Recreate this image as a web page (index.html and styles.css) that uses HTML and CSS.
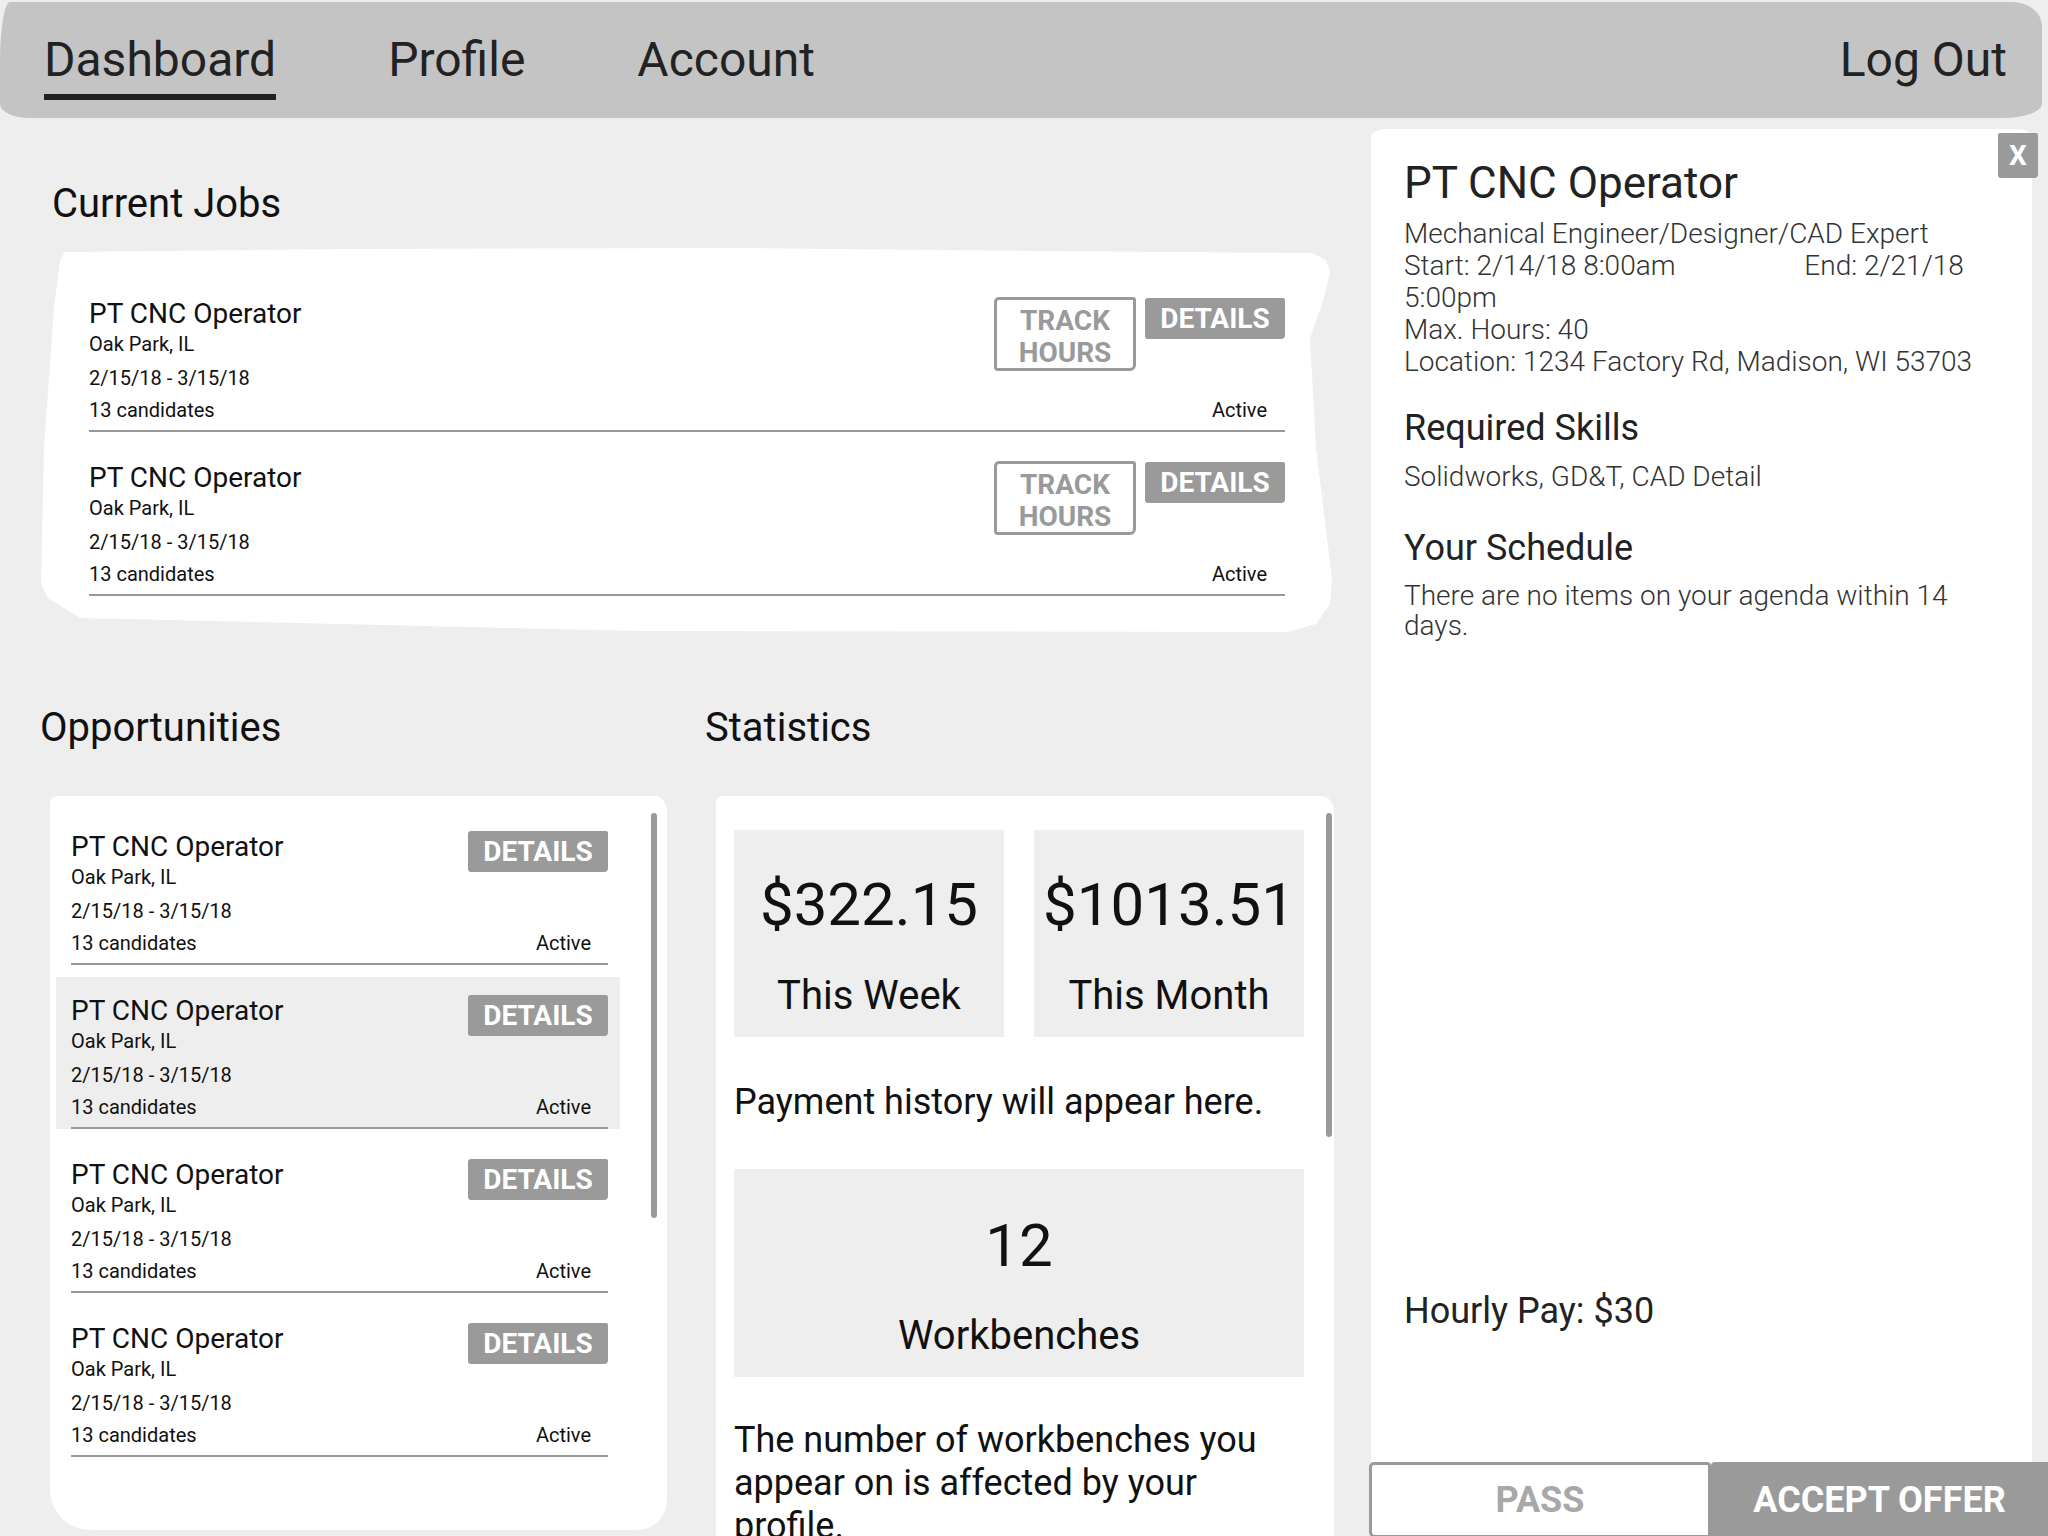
FILE: index.html
```html
<!DOCTYPE html>
<html lang="en">
<head>
<meta charset="utf-8">
<title>Dashboard</title>
<link rel="stylesheet" href="styles.css">
</head>
<body>
<header class="nav">
  <span class="nav-item active">Dashboard</span>
  <span class="nav-item">Profile</span>
  <span class="nav-item">Account</span>
  <span class="nav-item logout">Log Out</span>
</header>
<div class="main">
  <div class="left">
    <h2 class="section-title cj-title">Current Jobs</h2>
    <div class="jobs-card">
      <div class="job-row">
        <div class="job-info">
          <div class="title">PT CNC Operator</div>
          <div class="meta">Oak Park, IL</div>
          <div class="meta date">2/15/18 - 3/15/18</div>
          <div class="meta cand">13 candidates</div>
        </div>
        <div class="job-actions">
          <div class="btns"><span class="btn-track">TRACK<br>HOURS</span><span class="btn-details">DETAILS</span></div>
          <div class="status">Active</div>
        </div>
      </div>
      <div class="job-row">
        <div class="job-info">
          <div class="title">PT CNC Operator</div>
          <div class="meta">Oak Park, IL</div>
          <div class="meta date">2/15/18 - 3/15/18</div>
          <div class="meta cand">13 candidates</div>
        </div>
        <div class="job-actions">
          <div class="btns"><span class="btn-track">TRACK<br>HOURS</span><span class="btn-details">DETAILS</span></div>
          <div class="status">Active</div>
        </div>
      </div>
    </div>
    <div class="lower">
      <section class="opps">
        <h2 class="section-title">Opportunities</h2>
        <div class="opp-card">
          <div class="opp-item">
            <div class="job-row">
              <div class="job-info">
                <div class="title">PT CNC Operator</div>
                <div class="meta">Oak Park, IL</div>
                <div class="meta date">2/15/18 - 3/15/18</div>
                <div class="meta cand">13 candidates</div>
              </div>
              <div class="job-actions">
                <span class="btn-details">DETAILS</span>
                <div class="status">Active</div>
              </div>
            </div>
          </div>
          <div class="opp-item hl">
            <div class="job-row">
              <div class="job-info">
                <div class="title">PT CNC Operator</div>
                <div class="meta">Oak Park, IL</div>
                <div class="meta date">2/15/18 - 3/15/18</div>
                <div class="meta cand">13 candidates</div>
              </div>
              <div class="job-actions">
                <span class="btn-details">DETAILS</span>
                <div class="status">Active</div>
              </div>
            </div>
          </div>
          <div class="opp-item">
            <div class="job-row">
              <div class="job-info">
                <div class="title">PT CNC Operator</div>
                <div class="meta">Oak Park, IL</div>
                <div class="meta date">2/15/18 - 3/15/18</div>
                <div class="meta cand">13 candidates</div>
              </div>
              <div class="job-actions">
                <span class="btn-details">DETAILS</span>
                <div class="status">Active</div>
              </div>
            </div>
          </div>
          <div class="opp-item">
            <div class="job-row">
              <div class="job-info">
                <div class="title">PT CNC Operator</div>
                <div class="meta">Oak Park, IL</div>
                <div class="meta date">2/15/18 - 3/15/18</div>
                <div class="meta cand">13 candidates</div>
              </div>
              <div class="job-actions">
                <span class="btn-details">DETAILS</span>
                <div class="status">Active</div>
              </div>
            </div>
          </div>
          <div class="scrollbar opp-scroll"></div>
        </div>
      </section>
      <section class="stats">
        <h2 class="section-title">Statistics</h2>
        <div class="stats-card">
          <div class="stat-grid">
            <div class="stat-box">
              <div class="stat-value">$322.15</div>
              <div class="stat-label">This Week</div>
            </div>
            <div class="stat-box">
              <div class="stat-value">$1013.51</div>
              <div class="stat-label">This Month</div>
            </div>
          </div>
          <p class="stat-text payment">Payment history will appear here.</p>
          <div class="stat-box wide">
            <div class="stat-value">12</div>
            <div class="stat-label">Workbenches</div>
          </div>
          <p class="stat-text wb-text">The number of workbenches you appear on is affected by your profile.</p>
          <div class="scrollbar stats-scroll"></div>
        </div>
      </section>
    </div>
  </div>
  <aside class="panel">
    <span class="close">X</span>
    <h1 class="panel-title">PT CNC Operator</h1>
    <div class="panel-details">
      <div>Mechanical Engineer/Designer/CAD Expert</div>
      <div><span class="start">Start: 2/14/18 8:00am</span> End: 2/21/18 5:00pm</div>
      <div>Max. Hours: 40</div>
      <div>Location: 1234 Factory Rd, Madison, WI 53703</div>
    </div>
    <h3 class="panel-h">Required Skills</h3>
    <div class="panel-text">Solidworks, GD&amp;T, CAD Detail</div>
    <h3 class="panel-h sched">Your Schedule</h3>
    <div class="panel-text agenda">There are no items on your agenda within 14 days.</div>
    <div class="panel-footer">
      <div class="hourly">Hourly Pay: $30</div>
      <div class="offer-btns">
        <span class="btn-pass">PASS</span>
        <span class="btn-accept">ACCEPT OFFER</span>
      </div>
    </div>
  </aside>
</div>
</body>
</html>
```

FILE: styles.css
```css
* { box-sizing: border-box; margin: 0; padding: 0; }

body {
  width: 2048px;
  height: 1536px;
  overflow: hidden;
  background: #eeeeee;
  font-family: Roboto, "Liberation Sans", sans-serif;
  color: #111;
}

/* Top navigation */
.nav {
  display: flex;
  align-items: flex-start;
  gap: 112px;
  height: 116px;
  margin: 2px 6px 0 0;
  padding: 34px 35px 0 44px;
  background: #c4c4c4;
  border-radius: 10px 30px 40px 30px / 60px 24px 14px 14px;
}
.nav-item {
  font-size: 48px;
  line-height: 48px;
  color: #222;
  padding-bottom: 10px;
}
.nav-item.active { border-bottom: 6px solid #222; }
.nav-item.logout { margin-left: auto; }

.main { display: flex; }
.left { width: 1371px; flex: none; }

.section-title {
  font-size: 40px;
  line-height: 48px;
  font-weight: 400;
  color: #111;
}
.cj-title { margin: 62px 0 0 52px; }

/* Current jobs card (hand-drawn outline) */
.jobs-card {
  width: 1295px;
  height: 384px;
  margin: 20px 0 0 40px;
  padding: 20px 50px 36px 49px;
  background: #fff;
  clip-path: polygon(25px 4px, 300px 1px, 700px 0, 1000px 3px, 1272px 5px, 1286px 12px, 1290px 24px, 1284px 50px, 1270px 90px, 1276px 200px, 1292px 330px, 1290px 356px, 1276px 376px, 1248px 384px, 600px 383px, 40px 370px, 8px 350px, 1px 336px, 4px 200px, 14px 60px, 20px 12px);
}
.job-row {
  display: flex;
  justify-content: space-between;
  padding: 30px 0 6px;
  border-bottom: 2px solid #999;
}
.title { font-size: 28px; line-height: 32px; color: #111; }
.meta { font-size: 20px; line-height: 28px; color: #111; }
.meta.date { margin-top: 6px; }
.meta.cand { margin-top: 4px; }

.job-actions {
  display: flex;
  flex-direction: column;
  align-items: flex-end;
  justify-content: space-between;
}
.btns { display: flex; gap: 9px; align-items: flex-start; }
.btn-track {
  width: 142px;
  height: 74px;
  padding-top: 6px;
  display: flex;
  align-items: center;
  justify-content: center;
  text-align: center;
  border: 3px solid #9a9a9a;
  border-radius: 5px 3px 6px 4px;
  background: #fff;
  color: #9a9a9a;
  font-size: 28px;
  font-weight: 700;
  line-height: 32px;
  margin-top: -1px;
}
.btn-details {
  display: block;
  width: 140px;
  height: 41px;
  line-height: 41px;
  text-align: center;
  background: #9a9a9a;
  color: #fff;
  font-size: 28px;
  font-weight: 700;
  border-radius: 3px 2px 4px 3px;
}
.status { font-size: 20px; line-height: 28px; margin-right: 18px; color: #111; }

/* Lower area */
.lower { display: flex; margin-top: 72px; padding-left: 40px; }
.opps { width: 665px; flex: none; }
.stats { flex: 1; }

.opp-card {
  position: relative;
  width: 617px;
  height: 734px;
  margin: 44px 0 0 10px;
  padding: 5px 0 0 6px;
  background: #fff;
  border-radius: 8px 12px 30px 40px / 8px 16px 30px 40px;
}
.opp-item {
  width: 564px;
  margin-top: 12px;
  padding: 18px 12px 0 15px;
}
.opp-item.hl { background: #eeeeee; }
.opp-item .job-row { padding-top: 0; }
.opp-item .status { margin-right: 17px; }

.scrollbar {
  position: absolute;
  width: 6px;
  border-radius: 3px;
  background: #9a9a9a;
}
.opp-scroll { left: 601px; top: 17px; height: 405px; }
.stats-scroll { left: 610px; top: 17px; height: 324px; }

.stats-card {
  position: relative;
  width: 618px;
  height: 800px;
  margin: 44px 0 0 11px;
  padding: 34px 0 0 18px;
  background: #fff;
  border-radius: 6px 14px 0 0 / 6px 14px 0 0;
}
.stat-grid { display: flex; gap: 30px; width: 570px; }
.stat-box {
  width: 270px;
  padding: 40px 0 17px;
  background: #eeeeee;
  text-align: center;
  color: #111;
}
.stat-value { font-size: 60px; line-height: 70px; }
.stat-label { font-size: 40px; line-height: 48px; margin-top: 32px; }
.stat-box.wide { width: 570px; margin-top: 45px; padding-top: 42px; }
.stat-box.wide .stat-label { margin-top: 31px; }
.stat-text { width: 570px; font-size: 36px; line-height: 43px; color: #111; }
.payment { margin-top: 44px; }
.wb-text { margin-top: 42px; }

/* Right detail panel */
.panel {
  position: relative;
  display: flex;
  flex-direction: column;
  width: 661px;
  height: 1409px;
  margin-top: 11px;
  padding: 28px 40px 0 33px;
  background: #fff;
  color: #333;
  border-radius: 16px 12px 0 0 / 8px 10px 0 0;
}
.close {
  position: absolute;
  top: 4px;
  right: -6px;
  width: 40px;
  height: 45px;
  line-height: 45px;
  text-align: center;
  background: #9a9a9a;
  color: #fff;
  font-size: 28px;
  font-weight: 700;
  border-radius: 2px 2px 4px 3px;
}
.panel-title { font-size: 44px; line-height: 52px; font-weight: 400; color: #222; }
.panel-details { margin-top: 9px; font-size: 28px; line-height: 32px; font-weight: 300; }
.start { padding-right: 122px; }
.panel-h { margin-top: 29px; font-size: 36px; line-height: 43px; font-weight: 400; color: #222; }
.panel-h.sched { margin-top: 34px; }
.panel-text { margin-top: 11px; font-size: 28px; line-height: 32px; font-weight: 300; }
.panel-text.agenda { line-height: 30px; }

.panel-footer { margin-top: auto; }
.hourly { font-size: 36px; line-height: 43px; color: #222; margin-bottom: 129px; }
.offer-btns { display: flex; margin: 0 -56px 0 -35px; }
.btn-pass {
  width: 342px;
  height: 76px;
  line-height: 70px;
  text-align: center;
  border: 3px solid #9a9a9a;
  border-radius: 5px 4px 3px 6px;
  background: #fff;
  color: #a8a8a8;
  font-size: 36px;
  font-weight: 700;
}
.btn-accept {
  flex: 1;
  height: 76px;
  line-height: 76px;
  text-align: center;
  background: #9a9a9a;
  color: #fff;
  font-size: 36px;
  font-weight: 700;
  border-radius: 4px 0 0 0;
}
```
